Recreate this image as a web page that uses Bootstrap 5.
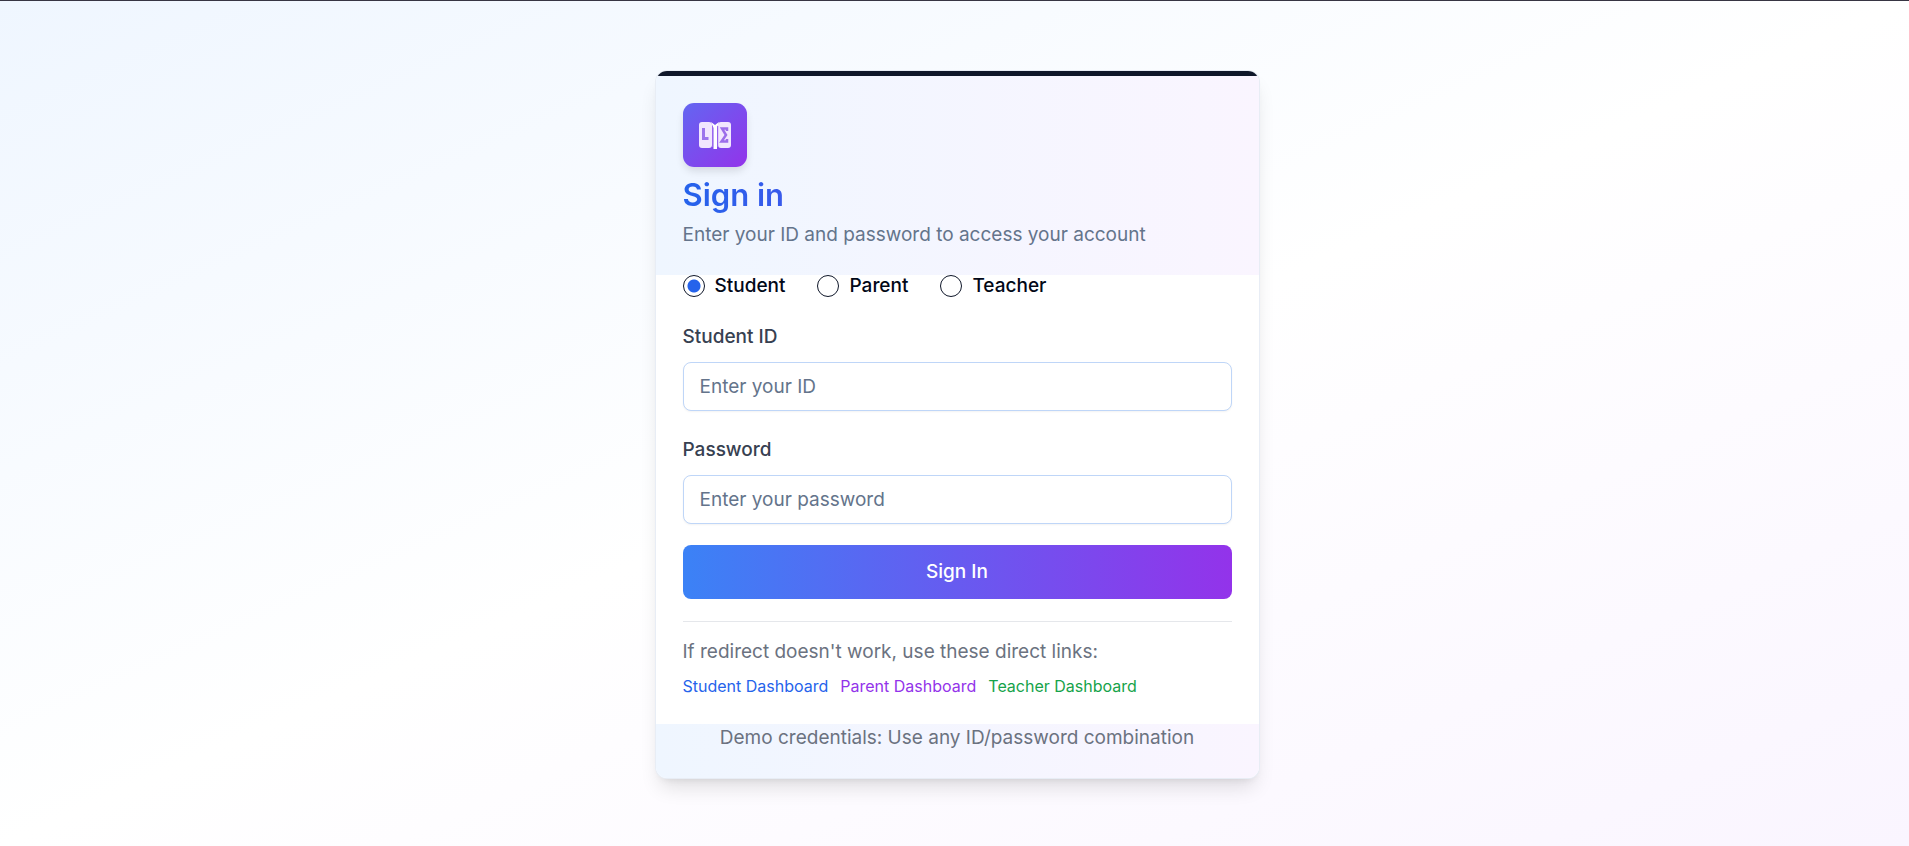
<!DOCTYPE html>
<html lang="en">
<head>
<meta charset="utf-8">
<meta name="viewport" content="width=device-width, initial-scale=1">
<title>Sign in</title>
<link rel="stylesheet" href="https://cdn.jsdelivr.net/npm/bootstrap@5.3.0/dist/css/bootstrap.min.css">
<style>
  body {
    font-family: Inter, "Liberation Sans", sans-serif;
    font-size: 19px;
    line-height: 28px;
    color: #020817;
    padding: 2px 0 0 5px;
    border-top: 1px solid #373543;
    background: linear-gradient(to bottom right, #eff6ff, #fff 50%, #faf5ff);
  }
  .login-card {
    --bs-card-border-width: 0;
    --bs-card-border-radius: 11px;
    max-width: 603px;
    overflow: hidden;
    color: inherit;
    box-shadow: 0 0 0 1px #e8edf5, 0 13px 20px -4px rgba(0, 0, 0, .12), 0 5px 8px -5px rgba(0, 0, 0, .12);
  }
  .top-strip { height: 5px; background: #0f172a; }
  .tinted { background: linear-gradient(to right, #eff6ff, #faf5ff); }
  .gutter-x { padding-left: 27px; padding-right: 27px; }
  .card-head { padding-top: 27px; padding-bottom: 26px; }
  .logo-tile {
    width: 64px;
    height: 64px;
    border-radius: 11px;
    background: linear-gradient(to bottom right, #6366f1, #9333ea);
    box-shadow: 0 5px 8px -1px rgba(0, 0, 0, .12);
  }
  .logo-tile svg { filter: blur(.5px); }
  .title-text {
    font-size: 31px;
    line-height: 40px;
    font-weight: 600;
    margin: 8px 0 6px;
    background: linear-gradient(to right, #2563eb, #9333ea);
    -webkit-background-clip: text;
    background-clip: text;
    color: transparent;
  }
  .subtitle { color: #64748b; }
  .roles { gap: 32px; margin-bottom: 26px; }
  .roles label { line-height: 22px; font-weight: 500; }
  .roles .form-check-input {
    width: 22px;
    height: 22px;
    border: 1px solid #0f172a;
  }
  .roles .form-check-input:checked {
    background: radial-gradient(circle, #2563eb 6px, #fff 7px);
  }
  .roles .role-item { gap: 10px; }
  .field-name { font-weight: 500; color: #374151; margin-bottom: 11px; }
  .field-box {
    height: 49px;
    padding: 8px 16px;
    border: 1px solid #bfd6f8;
    border-radius: 8px;
    font-size: 19px;
    box-shadow: 0 1px 2px rgba(0, 0, 0, .05);
  }
  .field-box::placeholder { color: #64748b; }
  .field-group { margin-bottom: 25px; }
  .field-group.last-field { margin-bottom: 21px; }
  .submit-btn {
    height: 54px;
    border: 0;
    border-radius: 8px;
    font-size: 19px;
    font-weight: 500;
    color: #fff;
    background: linear-gradient(to right, #3b82f6, #9333ea);
  }
  .fallback { margin-top: 22px; padding-top: 16px; padding-bottom: 26px; border-top: 1px solid #e5e7eb; color: #6b7280; }
  .quick-links { gap: 12px; margin-top: 8px; font-size: 16px; line-height: 24px; }
  .quick-links a { text-decoration: none; }
  .to-student { color: #2563eb; }
  .to-parent { color: #9333ea; }
  .to-teacher { color: #16a34a; }
  .card-foot { padding-bottom: 26px; color: #6b7280; }
</style>
</head>
<body class="min-vh-100 d-flex align-items-center justify-content-center">
<main class="card login-card w-100">
  <div class="top-strip"></div>
  <header class="tinted gutter-x card-head">
    <div class="logo-tile d-flex align-items-center justify-content-center">
      <svg width="34" height="30" viewBox="0 0 34 30" aria-hidden="true">
        <rect x="1" y="2" width="13" height="26" rx="3" fill="#f1e6fe"/>
        <rect x="20" y="2" width="13" height="26" rx="3" fill="#f1e6fe"/>
        <path d="M13 2L17 5L21 2L19 8V29H15.500V8Z" fill="#fff"/>
        <path d="M14.500 6V27M19.700 6V27" stroke="#9b68ee" stroke-width="1" fill="none"/>
        <path d="M5.500 8V18.500H10.500" stroke="#9c75ec" stroke-width="3" fill="none"/>
        <path d="M29 11V8.500H24L28 15L23.500 21.500H29V19" stroke="#9c6dea" stroke-width="2.500" fill="none"/>
      </svg>
    </div>
    <h1 class="title-text">Sign in</h1>
    <p class="subtitle mb-0">Enter your ID and password to access your account</p>
  </header>
  <form class="gutter-x">
    <div class="roles d-flex flex-wrap" role="radiogroup" aria-label="Account type">
      <div class="role-item d-flex">
        <input class="form-check-input m-0" type="radio" name="role" id="role-student" checked>
        <label for="role-student">Student</label>
      </div>
      <div class="role-item d-flex">
        <input class="form-check-input m-0" type="radio" name="role" id="role-parent">
        <label for="role-parent">Parent</label>
      </div>
      <div class="role-item d-flex">
        <input class="form-check-input m-0" type="radio" name="role" id="role-teacher">
        <label for="role-teacher">Teacher</label>
      </div>
    </div>
    <div class="field-group">
      <label class="field-name d-block" for="student-id">Student ID</label>
      <input class="form-control field-box" type="text" id="student-id" placeholder="Enter your ID">
    </div>
    <div class="field-group last-field">
      <label class="field-name d-block" for="password">Password</label>
      <input class="form-control field-box" type="password" id="password" placeholder="Enter your password">
    </div>
    <button class="btn submit-btn w-100" type="submit">Sign In</button>
    <div class="fallback">
      <p class="mb-0">If redirect doesn't work, use these direct links:</p>
      <nav class="quick-links d-flex flex-wrap" aria-label="Dashboards">
        <a class="to-student" href="#student">Student Dashboard</a>
        <a class="to-parent" href="#parent">Parent Dashboard</a>
        <a class="to-teacher" href="#teacher">Teacher Dashboard</a>
      </nav>
    </div>
  </form>
  <footer class="tinted gutter-x card-foot text-center">Demo credentials: Use any ID/password combination</footer>
</main>
<script src="https://cdn.jsdelivr.net/npm/bootstrap@5.3.0/dist/js/bootstrap.bundle.min.js"></script>
</body>
</html>
